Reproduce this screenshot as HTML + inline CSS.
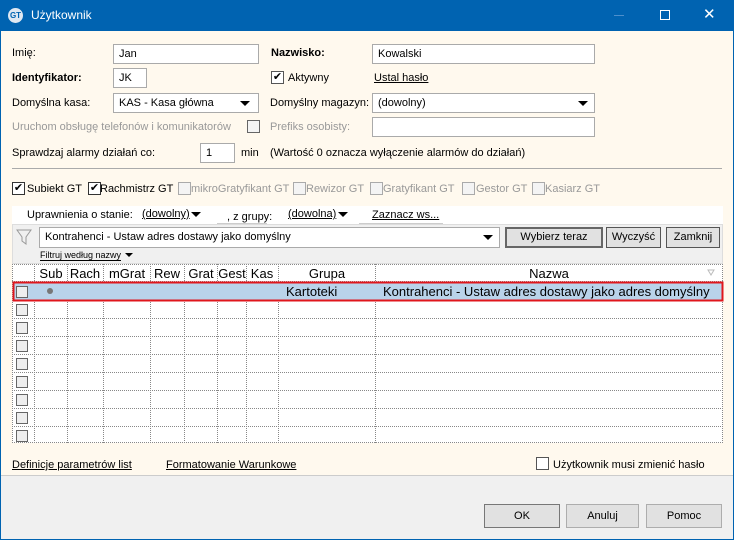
<!DOCTYPE html><html><head><style>
*{box-sizing:border-box;margin:0;padding:0}
body{width:734px;height:540px;overflow:hidden;font-family:"Liberation Sans",sans-serif;font-size:11px;color:#000;background:#0063b1;position:relative}
.a{position:absolute;white-space:nowrap}
.in{position:absolute;background:#fff;border:1px solid #aaa;height:20px;padding:3px 5px}
.dis{color:#999}
.cb{position:absolute;width:13px;height:13px;border:1px solid #333;background:#fff;font-size:11px;line-height:11px;text-align:center}
.cbd{border:1px solid #aaa;background:#f4f4f4}
.tri{position:absolute;width:0;height:0;border-left:5px solid transparent;border-right:5px solid transparent;border-top:5px solid #000}
.btn{position:absolute;border:1px solid #adadad;background:#e1e1e1;text-align:center;height:24px;line-height:22px}
u{text-decoration:underline}
</style></head><body>
<div class="a" style="left:0;top:0;width:734px;height:31px;background:#0063b1"></div>
<div class="a" style="left:8px;top:8px;width:15px;height:15px;border-radius:50%;background:#dfe8f2;color:#0063b1;font-size:8px;font-weight:bold;line-height:15px;text-align:center">GT</div>
<div class="a" style="left:31px;top:8px;color:#fff;font-size:12px">Użytkownik</div>
<div class="a" style="left:614px;top:15px;width:10px;height:1px;background:#4d8fcc"></div>
<div class="a" style="left:660px;top:10px;width:10px;height:10px;border:1px solid #fff"></div>
<div class="a" style="left:703px;top:5px;color:#fff;font-size:15px">✕</div>
<div class="a" style="left:1px;top:31px;width:732px;height:444px;background:#fff9ee"></div>
<div class="a" style="left:1px;top:475px;width:732px;height:64px;background:#f0f0f0;border-top:1px solid #ccc"></div>

<div class="a" style="left:12px;top:47px">Imię:</div>
<div class="in" style="left:113px;top:44px;width:146px">Jan</div>
<div class="a" style="left:271px;top:47px;font-weight:bold">Nazwisko:</div>
<div class="in" style="left:372px;top:44px;width:223px">Kowalski</div>
<div class="a" style="left:12px;top:72px;font-weight:bold">Identyfikator:</div>
<div class="in" style="left:113px;top:68px;width:34px">JK</div>
<div class="cb" style="left:271px;top:71px;border-color:#555">✔</div>
<div class="a" style="left:288px;top:72px">Aktywny</div>
<div class="a" style="left:374px;top:72px"><u>Ustal hasło</u></div>
<div class="a" style="left:12px;top:97px">Domyślna kasa:</div>
<div class="in" style="left:113px;top:93px;width:146px">KAS - Kasa główna</div>
<div class="tri" style="left:240px;top:101px"></div>
<div class="a" style="left:270px;top:97px">Domyślny magazyn:</div>
<div class="in" style="left:372px;top:93px;width:223px">(dowolny)</div>
<div class="tri" style="left:578px;top:101px"></div>
<div class="a dis" style="left:12px;top:121px">Uruchom obsługę telefonów i komunikatorów</div>
<div class="cb cbd" style="left:247px;top:120px;border-color:#666"></div>
<div class="a dis" style="left:270px;top:121px">Prefiks osobisty:</div>
<div class="in" style="left:372px;top:117px;width:223px"></div>
<div class="a" style="left:12px;top:147px">Sprawdzaj alarmy działań co:</div>
<div class="in" style="left:200px;top:143px;width:35px">1</div>
<div class="a" style="left:241px;top:147px">min</div>
<div class="a" style="left:270px;top:147px">(Wartość 0 oznacza wyłączenie alarmów do działań)</div>
<div class="a" style="left:12px;top:168px;width:710px;height:1px;background:#aaa"></div>

<div class="cb" style="left:12px;top:182px">✔</div><div class="a" style="left:27px;top:183px">Subiekt GT</div>
<div class="cb" style="left:88px;top:182px">✔</div><div class="a" style="left:100px;top:183px">Rachmistrz GT</div>
<div class="cb cbd" style="left:178px;top:182px"></div><div class="a dis" style="left:191px;top:183px">mikroGratyfikant GT</div>
<div class="cb cbd" style="left:293px;top:182px"></div><div class="a dis" style="left:306px;top:183px">Rewizor GT</div>
<div class="cb cbd" style="left:370px;top:182px"></div><div class="a dis" style="left:383px;top:183px">Gratyfikant GT</div>
<div class="cb cbd" style="left:462px;top:182px"></div><div class="a dis" style="left:476px;top:183px">Gestor GT</div>
<div class="cb cbd" style="left:532px;top:182px"></div><div class="a dis" style="left:545px;top:183px">Kasiarz GT</div>

<div class="a" style="left:12px;top:206px;width:711px;height:18px;background:#fff"></div>
<div class="a" style="left:27px;top:209px">Uprawnienia o stanie:</div>
<div class="a" style="left:142px;top:208px"><u>(dowolny)</u></div><div class="tri" style="left:191px;top:212px"></div>
<div class="a" style="left:217px;top:211px;width:50px;border-bottom:1px solid #ccc;padding-left:10px">, z grupy:</div>
<div class="a" style="left:288px;top:208px"><u>(dowolna)</u></div><div class="tri" style="left:338px;top:212px"></div>
<div class="a" style="left:359px;top:223px;width:84px;height:1px;background:#ccc"></div>
<div class="a" style="left:372px;top:209px"><u>Zaznacz ws...</u></div>

<div class="a" style="left:12px;top:224px;width:711px;height:40px;background:#f0f0f0;border:1px solid #ddd"></div>
<svg class="a" style="left:16px;top:229px" width="16" height="16"><path d="M1 1H15L10 8V15L6 12V8Z" fill="none" stroke="#999"/></svg>
<div class="in" style="left:39px;top:227px;width:461px;height:21px">Kontrahenci - Ustaw adres dostawy jako domyślny</div>
<div class="tri" style="left:483px;top:235px"></div>
<div class="btn" style="left:505px;top:227px;width:98px;height:21px;line-height:17px;border:2px solid #666">Wybierz teraz</div>
<div class="btn" style="left:606px;top:227px;width:55px;height:21px;line-height:19px;border:1px solid #555">Wyczyść</div>
<div class="btn" style="left:666px;top:227px;width:54px;height:21px;line-height:19px;border:1px solid #555">Zamknij</div>
<div class="a" style="left:40px;top:250px;font-size:9px;border-bottom:1px solid #000">Filtruj według nazwy</div>
<div class="tri" style="left:125px;top:253px;border-width:4px 4px 0"></div>

<svg class="a" style="left:12px;top:264px" width="712" height="180" font-family="Liberation Sans" font-size="13">
<rect x="0" y="0" width="711" height="179" fill="#fff"/>
<g stroke="#888" stroke-dasharray="1,1" fill="none">
<path d="M0.5 0V178.5H710.5V0"/>
<path d="M22.5 0V179M55.5 0V179M91.5 0V179M138.5 0V179M172.5 0V179M205.5 0V179M234.5 0V179M266.5 0V179M363.5 0V179"/>
<path d="M0 0.5H711M0 17.5H711M0 36.5H711M0 54.5H711M0 72.5H711M0 90.5H711M0 108.5H711M0 126.5H711M0 144.5H711M0 162.5H711"/>
</g>
<rect x="1" y="19" width="709" height="17" fill="#b9d3ea"/>
<rect x="1.5" y="18.5" width="709" height="18" fill="none" stroke="#e0161c" stroke-width="2"/>
<g text-anchor="middle" fill="#000"><text x="39" y="14">Sub</text><text x="73" y="14">Rach</text><text x="115" y="14">mGrat</text><text x="155" y="14">Rew</text><text x="189" y="14">Grat</text><text x="220" y="14">Gest</text><text x="250" y="14">Kas</text><text x="315" y="14">Grupa</text><text x="537" y="14">Nazwa</text></g>
<path d="M696 6H702L699 11Z" fill="none" stroke="#bbb"/>
<circle cx="38" cy="27" r="3" fill="#777"/>
<text x="274" y="32">Kartoteki</text>
<text x="371" y="32">Kontrahenci - Ustaw adres dostawy jako adres domyślny</text>
<g fill="#eee" stroke="#666">
<rect x="4.5" y="22.5" width="11" height="11"/><rect x="4.5" y="40.5" width="11" height="11"/><rect x="4.5" y="58.5" width="11" height="11"/><rect x="4.5" y="76.5" width="11" height="11"/><rect x="4.5" y="94.5" width="11" height="11"/><rect x="4.5" y="112.5" width="11" height="11"/><rect x="4.5" y="130.5" width="11" height="11"/><rect x="4.5" y="148.5" width="11" height="11"/><rect x="4.5" y="166.5" width="11" height="11"/>
</g>
</svg>

<div class="a" style="left:12px;top:459px"><u>Definicje parametrów list</u></div>
<div class="a" style="left:166px;top:459px"><u>Formatowanie Warunkowe</u></div>
<div class="cb" style="left:536px;top:457px;border-color:#555"></div>
<div class="a" style="left:553px;top:459px">Użytkownik musi zmienić hasło</div>

<div class="btn" style="left:484px;top:504px;width:76px;border:1px solid #777">OK</div>
<div class="btn" style="left:566px;top:504px;width:73px">Anuluj</div>
<div class="btn" style="left:646px;top:504px;width:76px">Pomoc</div>
</body></html>
